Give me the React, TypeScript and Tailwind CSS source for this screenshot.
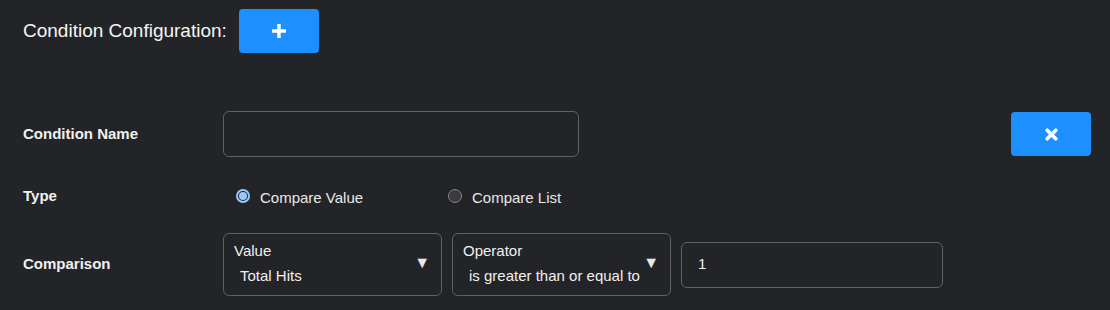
import React from "react";

const font = { fontFamily: '"Liberation Sans", Arial, sans-serif' };

function Radio({ checked, label }: { checked: boolean; label: string }) {
  return (
    <div className="flex items-center gap-[10px]">
      {checked ? (
        <span className="w-[14px] h-[14px] rounded-full border-2 border-[#99c8ff] flex items-center justify-center bg-[#232427]">
          <span className="w-[8px] h-[8px] rounded-full bg-[#99c8ff]" />
        </span>
      ) : (
        <span className="w-[14px] h-[14px] rounded-full border border-[#858585] bg-[#3b3b3b]" />
      )}
      <span className="text-[15px] text-[#e8e8e8] mt-[4px]">{label}</span>
    </div>
  );
}

function Select({ label, value }: { label: string; value: string }) {
  return (
    <div className="w-[219px] h-[63px] rounded-[6px] border border-[#5f6063] flex items-start justify-between pl-[10px] pr-[11px] pt-[8px]">
      <div className="flex flex-col">
        <span className="text-[15px] text-[#f0f0f0] leading-[17px]">{label}</span>
        <span className="text-[15px] text-[#f0f0f0] leading-[17px] mt-[8px] ml-[6px]">{value}</span>
      </div>
      <span className="text-[16px] text-[#e8e8e8] mt-[12px] leading-[17px]">▼</span>
    </div>
  );
}

export default function App() {
  return (
    <div className="w-[1110px] h-[310px] bg-[#232427] text-white overflow-hidden" style={font}>
      <div className="flex items-center pl-[23px] pt-[9px]">
        <span className="text-[19px] text-[#f5f5f5] mr-[12px]">Condition Configuration:</span>
        <button className="w-[80px] h-[44px] rounded-[4px] bg-[#1e8fff] flex items-center justify-center">
          <svg width="14" height="14" viewBox="0 0 14 14">
            <path d="M7 1v12M1 7h12" stroke="white" strokeWidth="3.4" strokeLinecap="square" />
          </svg>
        </button>
      </div>

      <div className="flex items-center pl-[23px] pr-[19px] mt-[58px]">
        <span className="w-[200px] text-[15px] font-bold text-[#f0f0f0]">Condition Name</span>
        <div className="w-[356px] h-[46px] rounded-[6px] border border-[#5f6063]" />
        <div className="flex-1" />
        <button className="w-[80px] h-[44px] rounded-[4px] bg-[#1e8fff] flex items-center justify-center">
          <svg width="13" height="13" viewBox="0 0 13 13">
            <path d="M2.2 2.2l8.6 8.6M10.8 2.2l-8.6 8.6" stroke="white" strokeWidth="3.6" strokeLinecap="round" />
          </svg>
        </button>
      </div>

      <div className="flex items-center pl-[23px] mt-[28px] h-[22px]">
        <span className="w-[213px] text-[15px] font-bold text-[#f0f0f0]">Type</span>
        <div className="w-[212px]">
          <Radio checked label="Compare Value" />
        </div>
        <Radio checked={false} label="Compare List" />
      </div>

      <div className="flex items-center pl-[23px] mt-[26px]">
        <span className="w-[200px] text-[15px] font-bold text-[#f0f0f0]">Comparison</span>
        <div className="flex items-center gap-[10px]">
          <Select label="Value" value="Total Hits" />
          <Select label="Operator" value="is greater than or equal to" />
          <div className="w-[262px] h-[46px] rounded-[6px] border border-[#5f6063] flex items-center pl-[16px]">
            <span className="text-[15px] text-[#f0f0f0]">1</span>
          </div>
        </div>
      </div>
    </div>
  );
}
